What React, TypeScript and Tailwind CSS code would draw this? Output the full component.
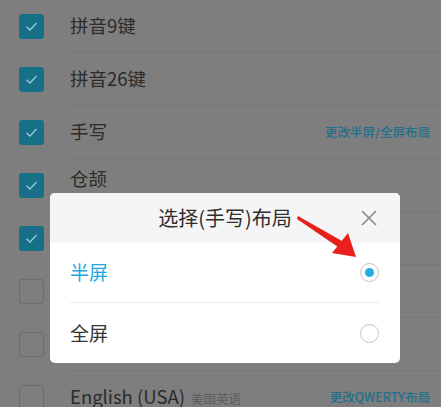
import React from 'react';

const rows = [
  { label: '拼音9键', checked: true },
  { label: '拼音26键', checked: true },
  { label: '手写', checked: true, link: '更改半屏/全屏布局' },
  { label: '仓颉', checked: true, up: true },
  { label: '笔画', checked: true },
  { label: '', checked: false },
  { label: '', checked: false },
  { label: 'English (USA)', sub: '美国英语', checked: false, link: '更改QWERTY布局' },
];

function Box({ checked }: { checked: boolean }) {
  if (!checked)
    return <div className="h-[25px] w-[25px] shrink-0 rounded-[3px] border border-[#6c6c6c]" />;
  return (
    <div className="flex h-[25px] w-[25px] shrink-0 items-center justify-center rounded-[3px] bg-[#17708a]">
      <svg width="15" height="15" viewBox="0 0 15 15" fill="none">
        <path d="M2.5 7.8 L6 11 L12.5 4" stroke="#9cc9d6" strokeWidth="1.3" />
      </svg>
    </div>
  );
}

function Radio({ on }: { on: boolean }) {
  return (
    <div className="flex h-[19px] w-[19px] items-center justify-center rounded-full border-[1.5px] border-[#c4c4c4]">
      {on && <div className="h-[9px] w-[9px] rounded-full bg-[#22ade0]" />}
    </div>
  );
}

export default function App() {
  return (
    <div
      className="relative h-[407px] w-[441px] overflow-hidden bg-[#7e7e7e]"
      style={{ fontFamily: '"Noto Sans CJK SC", "Noto Sans", sans-serif' }}
    >
      {/* background list, dimmed */}
      <div className="flex flex-col">
        {rows.map((r, i) => (
          <div key={i} className="flex h-[53px] items-center pl-[19px]">
            <Box checked={r.checked} />
            <div className="ml-[26px] flex h-full flex-1 items-center border-b border-[#777] pr-[11px]">
              <span className={`text-[18.5px] text-[#2b2b2b] ${r.up ? 'mb-[12px]' : ''}`}>{r.label}</span>
              {r.sub && <span className="ml-[6px] mt-[4px] text-[12.5px] text-[#5c5c5c]">{r.sub}</span>}
              {r.link && <span className="ml-auto text-[12.5px] font-medium text-[#236f8d]">{r.link}</span>}
            </div>
          </div>
        ))}
      </div>

      {/* dialog */}
      <div className="absolute left-[50px] top-[193px] flex h-[170px] w-[350px] flex-col overflow-hidden rounded-[5px] bg-white">
        <div className="relative flex h-[50px] items-center justify-center bg-[#f5f5f5]">
          <span className="text-[20px] text-[#2e2e2e]">选择(手写)布局</span>
          <svg className="absolute right-[23px] top-[17px]" width="16" height="16" viewBox="0 0 16 16">
            <path d="M1 1 L15 15 M15 1 L1 15" stroke="#888" strokeWidth="1.6" />
          </svg>
        </div>
        <div className="mx-[20px] flex h-[60px] items-center justify-between border-b border-[#ececec]">
          <span className="text-[19px] text-[#1ea8df]">半屏</span>
          <div className="mr-[1px]"><Radio on /></div>
        </div>
        <div className="mx-[20px] flex h-[60px] items-center justify-between">
          <span className="text-[19px] text-[#333]">全屏</span>
          <div className="mr-[1px]"><Radio on={false} /></div>
        </div>
      </div>

      {/* red annotation arrow */}
      <svg className="absolute left-0 top-0" width="441" height="407" viewBox="0 0 441 407">
        <polygon points="298,216 342,241 338,247 297,219" fill="#e8201c" />
        <polygon points="356,257 332,253 348,233" fill="#e8201c" />
      </svg>
    </div>
  );
}
